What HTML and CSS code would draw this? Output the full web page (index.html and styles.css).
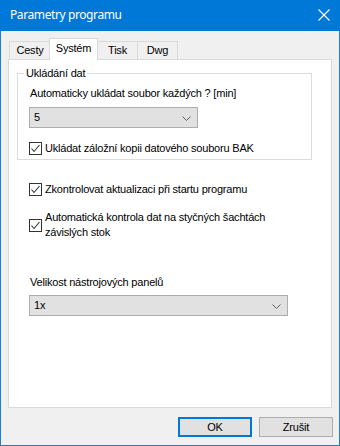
FILE: index.html
```html
<!DOCTYPE html>
<html lang="cs">
<head>
<meta charset="utf-8">
<link rel="stylesheet" href="styles.css">
</head>
<body>
<div class="window">
  <div class="titlebar">
    <span class="title">Parametry programu</span>
    <svg class="close" width="12" height="12" viewBox="0 0 12 12"><path d="M0.5 0.5 L11.5 11.5 M11.5 0.5 L0.5 11.5" stroke="#fff" stroke-width="1.1" fill="none"/></svg>
  </div>
  <div class="body">
    <div class="tabs">
      <div class="tab t1">Cesty</div>
      <div class="tab active">Systém</div>
      <div class="tab t3">Tisk</div>
      <div class="tab t4">Dwg</div>
    </div>
    <div class="panel">
      <div class="group">
        <div class="legend">Ukládání dat</div>
        <div class="label">Automaticky ukládat soubor každých ? [min]</div>
        <div class="select sel-small"><span>5</span><svg class="chev" width="9" height="5" viewBox="0 0 9 5"><path d="M0.5 0.5 L4.5 4.5 L8.5 0.5" stroke="#606060" fill="none"/></svg></div>
        <div class="check c1"><span class="box"><svg width="11" height="11" viewBox="0 0 11 11"><path d="M1.5 5.5 L4 8.5 L9.5 2" stroke="#333" stroke-width="1.1" fill="none"/></svg></span><span class="ctext">Ukládat záložní kopii datového souboru BAK</span></div>
      </div>
      <div class="check c2"><span class="box"><svg width="11" height="11" viewBox="0 0 11 11"><path d="M1.5 5.5 L4 8.5 L9.5 2" stroke="#333" stroke-width="1.1" fill="none"/></svg></span><span class="ctext">Zkontrolovat aktualizaci při startu programu</span></div>
      <div class="check c3"><span class="box"><svg width="11" height="11" viewBox="0 0 11 11"><path d="M1.5 5.5 L4 8.5 L9.5 2" stroke="#333" stroke-width="1.1" fill="none"/></svg></span><span class="ctext two">Automatická kontrola dat na styčných šachtách<br>závislých stok</span></div>
      <div class="label l2">Velikost nástrojových panelů</div>
      <div class="select sel-wide"><span>1x</span><svg class="chev" width="9" height="5" viewBox="0 0 9 5"><path d="M0.5 0.5 L4.5 4.5 L8.5 0.5" stroke="#606060" fill="none"/></svg></div>
    </div>
    <div class="buttons">
      <div class="btn default">OK</div>
      <div class="btn">Zrušit</div>
    </div>
  </div>
</div>
</body>
</html>
```
FILE: styles.css
```css
html, body {
  margin: 0;
  padding: 0;
}
body {
  font-family: "Liberation Sans", Arial, sans-serif;
  font-size: 11px;
  letter-spacing: -0.2px;
  color: #000;
}
.window {
  width: 340px;
  height: 446px;
  box-sizing: border-box;
  border: 1px solid #1a7fd4;
  border-top: none;
  background: #f0f0f0;
  display: flex;
  flex-direction: column;
}
.titlebar {
  height: 31px;
  flex: none;
  background: #0078d7;
  margin: 0 -1px;
  display: flex;
  align-items: center;
  justify-content: space-between;
  padding: 0 10px 0 10px;
  box-sizing: border-box;
}
.title {
  font-family: "Noto Sans", "Open Sans", sans-serif;
  font-size: 12px;
  letter-spacing: -0.4px;
  color: #fff;
  line-height: 16px;
  margin-top: -1px;
}
.close {
  margin-right: 0;
  margin-top: -1px;
}
.body {
  flex: 1;
  display: flex;
  flex-direction: column;
  padding: 0 7px;
}
.tabs {
  display: flex;
  align-items: flex-end;
  margin-top: 7px;
  margin-left: 1px;
  height: 21px;
}
.tab {
  height: 18px;
  box-sizing: border-box;
  border: 1px solid #d9d9d9;
  border-bottom: none;
  background: #f0f0f0;
  line-height: 17px;
  text-align: center;
  position: relative;
}
.t1 { width: 41px; padding-left: 1px; box-sizing: border-box; }
.active {
  width: 49px;
  height: 22px;
  margin-bottom: -1px;
  margin-left: -1px;
  background: #fff;
  z-index: 2;
  line-height: 18px;
  padding-bottom: 3px;
}
.t3 { width: 41px; margin-left: -1px; }
.t4 { width: 41px; margin-left: -1px; }
.panel {
  height: 349px;
  box-sizing: border-box;
  border: 1px solid #d9d9d9;
  background: #fff;
  padding: 0 0 0 8px;
  position: relative;
  z-index: 1;
}
.group {
  width: 295px;
  box-sizing: border-box;
  border: 1px solid #dcdcdc;
  margin-top: 13px;
  padding: 0 0 4px 11px;
}
.legend {
  width: fit-content;
  margin: -7px 0 0 -5px;
  padding: 0 2px;
  background: #fff;
  line-height: 13px;
}
.label {
  line-height: 13px;
  margin-top: 7px;
  padding-left: 1px;
}
.select {
  height: 21px;
  box-sizing: border-box;
  border: 1px solid #adadad;
  background: #e1e1e1;
  display: flex;
  align-items: center;
  justify-content: space-between;
  padding: 0 6px 0 4px;
}
.select span {
  line-height: 13px;
}
.sel-small {
  width: 169px;
  margin-top: 7px;
}
.sel-wide {
  width: 259px;
  margin-top: 6px;
  margin-left: 12px;
}
.chev {
  margin-top: 1px;
}
.check {
  display: flex;
  align-items: center;
}
.box {
  width: 13px;
  height: 13px;
  box-sizing: border-box;
  border: 1px solid #333;
  background: #fff;
  display: flex;
  align-items: center;
  justify-content: center;
  flex: none;
}
.ctext {
  line-height: 13px;
  margin-left: 3px;
}
.ctext.two {
  line-height: 15px;
}
.c1 {
  margin-top: 14px;
}
.c2 {
  margin-top: 23px;
  margin-left: 12px;
}
.c3 {
  margin-top: 14px;
  margin-left: 12px;
}
.l2 {
  margin-top: 36px;
  margin-left: 12px;
}
.buttons {
  display: flex;
  justify-content: flex-end;
  gap: 7px;
  margin-top: 9px;
  margin-right: -1px;
}
.btn {
  width: 74px;
  height: 20px;
  box-sizing: border-box;
  border: 1px solid #adadad;
  background: #e1e1e1;
  text-align: center;
  line-height: 18px;
}
.btn.default {
  border-color: #0078d7;
  box-shadow: inset 0 0 0 1px #0078d7;
}
```
